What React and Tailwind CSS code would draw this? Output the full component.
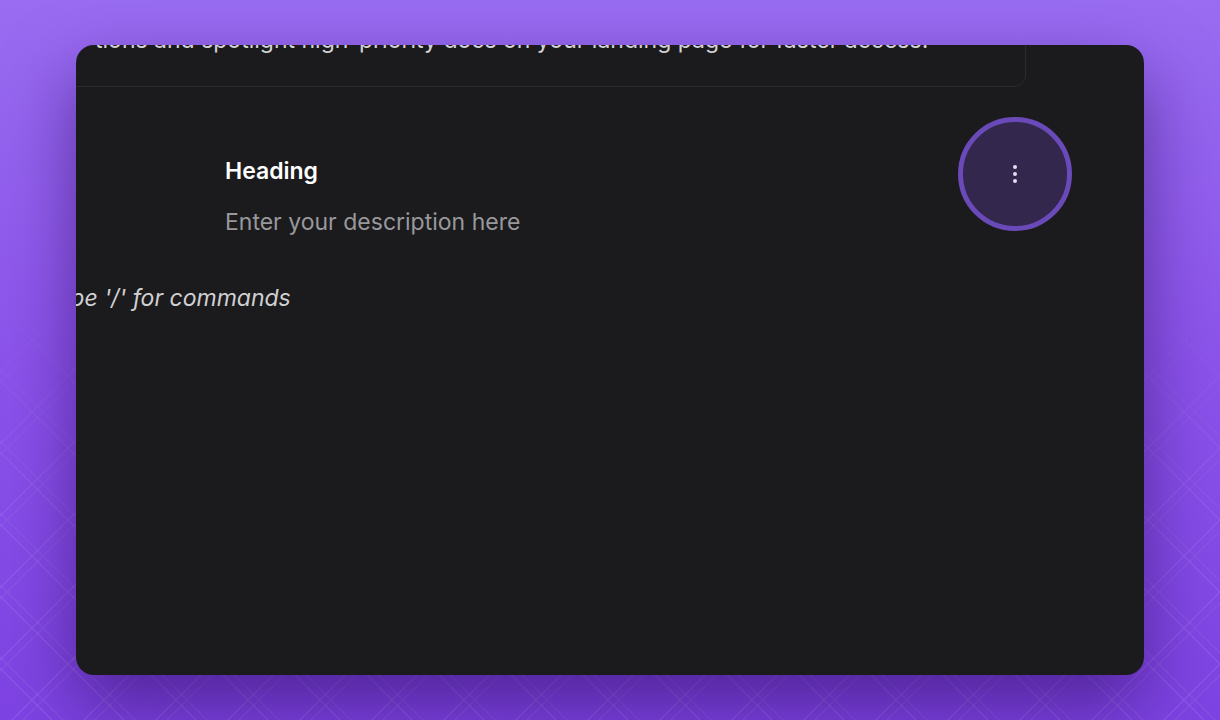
import React from "react";

function DiamondPattern() {
  return (
    <svg className="absolute inset-0 h-full w-full" aria-hidden="true">
      <defs>
        <pattern id="diamonds" width="72" height="72" patternUnits="userSpaceOnUse" x="-4" y="-20">
          <path d="M36 0 L72 36 L36 72 L0 36 Z" fill="none" stroke="rgba(255,255,255,0.11)" strokeWidth="1.2" />
          <path d="M47 0 L83 36 L47 72 L11 36 Z M-25 0 L11 36 L-25 72" fill="none" stroke="rgba(255,255,255,0.07)" strokeWidth="1.2" />
        </pattern>
        <linearGradient id="fade" x1="0" y1="0" x2="0" y2="1">
          <stop offset="0.35" stopColor="white" stopOpacity="0" />
          <stop offset="0.7" stopColor="white" stopOpacity="0.75" />
          <stop offset="1" stopColor="white" stopOpacity="1" />
        </linearGradient>
        <mask id="fadeMask">
          <rect width="100%" height="100%" fill="url(#fade)" />
        </mask>
      </defs>
      <rect width="100%" height="100%" fill="url(#diamonds)" mask="url(#fadeMask)" />
    </svg>
  );
}

export default function App() {
  return (
    <div className="relative h-[720px] w-[1220px] overflow-hidden bg-gradient-to-b from-[#996cf1] via-[#8c53eb] to-[#7e43e3] font-['Inter',sans-serif]">
      <DiamondPattern />

      <div className="relative flex h-full items-center justify-center">
        {/* Editor card */}
        <div className="flex h-[630px] w-[1068px] flex-col overflow-hidden rounded-[18px] bg-[#1b1b1d] shadow-[0_30px_70px_rgba(40,10,90,0.55)]">
          {/* Scrolled callout block */}
          <div className="ml-[-60px] mt-[-52px] w-[1010px] rounded-xl border border-[#2c2c2f] pb-8 pt-8">
            <p className="ml-[78px] whitespace-nowrap text-[23px] leading-[28px] text-[#d4d4d6]">
              tions and spotlight high-priority docs on your landing page for faster access.
            </p>
          </div>

          {/* Heading block */}
          <div className="mt-[30px] flex items-start">
            <div className="pl-[149px] pt-[40px]">
              <h2 className="text-[23px] font-semibold leading-[28px] text-white">Heading</h2>
              <p className="mt-[23px] text-[23px] leading-[28px] text-[#98989c]">Enter your description here</p>
            </div>
            <button className="ml-auto mr-[72px] flex h-[114px] w-[114px] items-center justify-center rounded-full border-[5px] border-[#6a4ab8] bg-[#33274d]">
              <svg width="6" height="20" viewBox="0 0 6 20" fill="#e4dcf5">
                <circle cx="3" cy="3" r="2" />
                <circle cx="3" cy="10" r="2" />
                <circle cx="3" cy="17" r="2" />
              </svg>
            </button>
          </div>

          {/* Placeholder line */}
          <p className="ml-[-32px] mt-[48px] whitespace-nowrap text-[23px] italic leading-[28px] text-[#d0d0d2]">
            Type '/' for commands
          </p>
        </div>
      </div>
    </div>
  );
}
